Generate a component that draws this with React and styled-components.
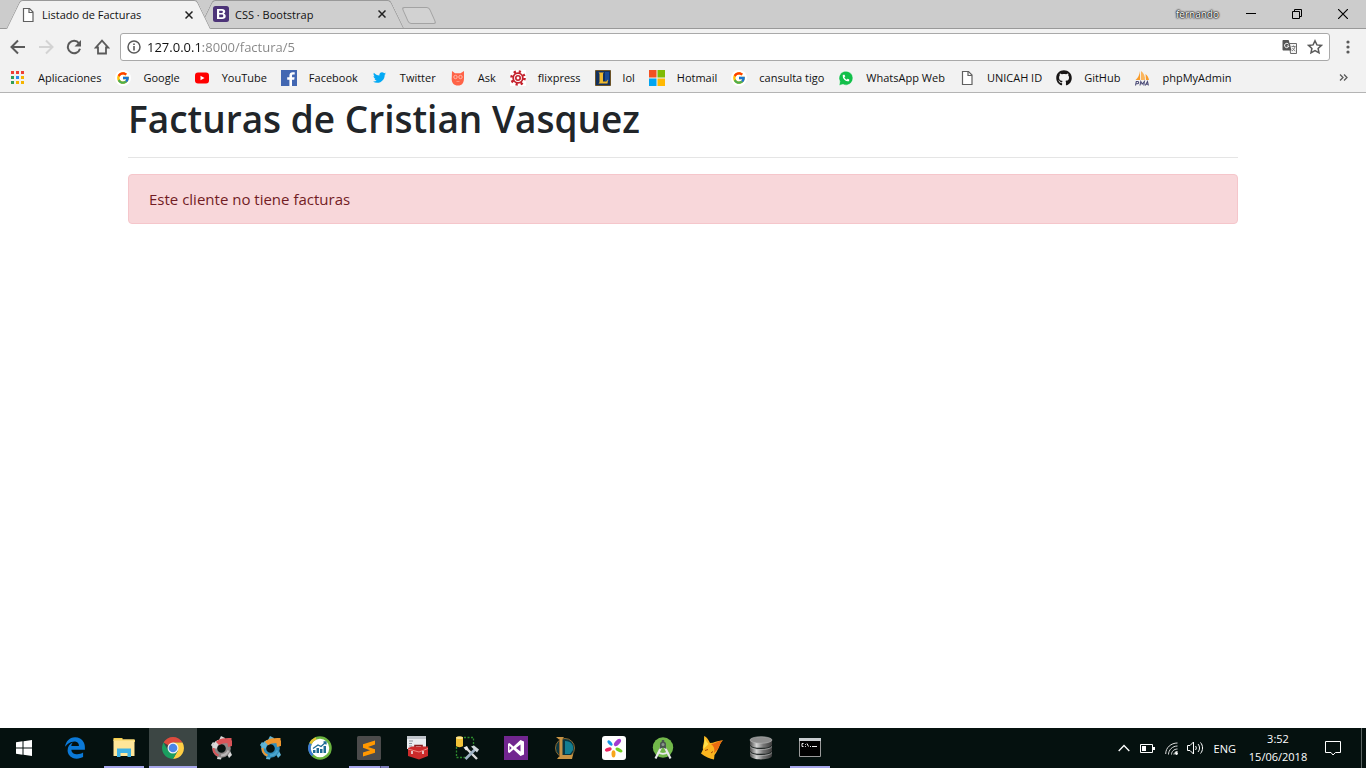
import React from "react";
import styled, { createGlobalStyle, css } from "styled-components";
import { FaGithub, FaTwitter, FaEdgeLegacy, FaPhone } from "react-icons/fa";
import { FcGoogle } from "react-icons/fc";

const GlobalStyle = createGlobalStyle`
  *, *::before, *::after { box-sizing: border-box; }
  body { margin: 0; font-family: "Segoe UI", "Open Sans", "Noto Sans", sans-serif; background: #fff; }
  button { font: inherit; color: inherit; border: 0; padding: 0; background: none; }
  a { color: inherit; text-decoration: none; }
  svg { display: block; flex: none; }
`;

const Screen = styled.div`
  display: flex;
  flex-direction: column;
  min-height: 100vh;
`;

/* ---------- Browser window ---------- */

const TabStrip = styled.div`
  display: flex;
  height: 29px;
  padding-left: 6px;
  background: #ccc;
  border-bottom: 1px solid #999;
`;

const tabSide = css`
  content: "";
  position: absolute;
  z-index: -1;
  top: 0;
  bottom: 0;
  width: 55%;
  border: 0 solid #999;
  border-top-width: 1px;
  background: ${(p) => (p.$active ? "#f2f2f2" : "#cfcfcf")};
`;

const Tab = styled.div`
  position: relative;
  z-index: ${(p) => (p.$active ? 2 : 1)};
  display: flex;
  align-items: center;
  gap: 6px;
  width: 205px;
  height: ${(p) => (p.$active ? "29px" : "28px")};
  margin-right: -12px;
  padding: 0 18px 0 14px;
  font-size: 11px;
  color: #111;
  &::before {
    ${tabSide}
    left: 0;
    border-left-width: 1px;
    border-top-left-radius: 3px;
    transform: skewX(-26deg);
    transform-origin: bottom left;
  }
  &::after {
    ${tabSide}
    right: 0;
    border-right-width: 1px;
    border-top-right-radius: 3px;
    transform: skewX(26deg);
    transform-origin: bottom right;
  }
`;

const TabTitle = styled.a`
  flex: 1;
  white-space: nowrap;
`;

const NewTab = styled.button`
  align-self: center;
  width: 28px;
  height: 17px;
  margin: 3px 0 0 13px;
  border: 1px solid #a3a3a3;
  border-radius: 3px;
  background: #d2d2d2;
  transform: skewX(24deg);
`;

const WindowControls = styled.div`
  display: flex;
  align-items: center;
  margin-left: auto;
`;

const Profile = styled.button`
  margin-right: 9px;
  font-size: 10px;
  color: #fff;
  text-shadow: 0 0 2px #000, 0 0 2px #000, 0 0 1px #000;
`;

const WindowButton = styled.button`
  display: grid;
  place-items: center;
  width: 46px;
  height: 27px;
`;

const Toolbar = styled.form`
  display: flex;
  align-items: flex-start;
  height: 33px;
  padding: 4px 0 0 8px;
  background: #f2f2f2;
`;

const ToolButton = styled.button`
  display: grid;
  place-items: center;
  width: ${(p) => (p.$wide ? "36px" : "28px")};
  height: 28px;
`;

const NavButtons = styled.div`
  display: flex;
  width: 112px;
  margin-left: -4px;
  margin-right: 4px;
`;

const AddressBox = styled.div`
  flex: 1;
  display: flex;
  align-items: center;
  height: 28px;
  padding: 0 6px;
  gap: 6px;
  background: #fff;
  border: 1px solid #a9a9a9;
  border-radius: 3px;
`;

const AddressInput = styled.input`
  flex: 1;
  min-width: 0;
  padding: 0;
  border: 0;
  outline: 0;
  font: 13px/20px "Segoe UI", "Open Sans", sans-serif;
  color: transparent;
  background: linear-gradient(to right, #111 56px, #858585 56px);
  background-clip: text;
`;

const AddressActions = styled.div`
  display: flex;
  gap: 9px;
`;

const BookmarksBar = styled.nav`
  display: flex;
  align-items: center;
  gap: 14px;
  height: 31px;
  padding: 1px 18px 0 10px;
  background: #f2f2f2;
  border-bottom: 1px solid #b4b4b4;
`;

const Bookmark = styled.a`
  display: flex;
  align-items: center;
  gap: 12px;
  font-size: 11px;
  color: #111;
  white-space: nowrap;
`;

const MoreBookmarks = styled.button`
  margin-left: auto;
`;

/* ---------- Page ---------- */

const Page = styled.main`
  flex: 1;
  width: 100%;
  max-width: 1140px;
  margin: 0 auto;
  padding: 0 15px;
  color: #212529;
`;

const Heading = styled.h1`
  margin: 0;
  font-size: 37px;
  font-weight: 600;
  line-height: 52px;
`;

const Rule = styled.hr`
  margin: 12px 0 16px;
  border: 0;
  border-top: 1px solid #e5e5e5;
`;

const Alert = styled.div`
  padding: 12px 20px;
  font-size: 15px;
  line-height: 24px;
  color: #721c24;
  background: #f8d7da;
  border: 1px solid #f5c6cb;
  border-radius: 4px;
`;

/* ---------- Taskbar ---------- */

const Taskbar = styled.footer`
  display: flex;
  height: 40px;
  color: #fff;
  background: #05110f;
`;

const Apps = styled.div`
  display: flex;
  gap: 1px;
  margin-left: 3px;
`;

const TaskButton = styled.button`
  position: relative;
  display: grid;
  place-items: center;
  width: 48px;
  height: 40px;
  background: ${(p) => (p.$state === "focused" ? "#3c4644" : "none")};
  &::after {
    content: "";
    display: ${(p) => (p.$state ? "block" : "none")};
    position: absolute;
    bottom: 0;
    left: ${(p) => (p.$state === "focused" ? "0" : "4px")};
    right: ${(p) => (p.$state === "focused" ? "0" : "4px")};
    height: 2px;
    background: ${(p) =>
      p.$state === "stacked"
        ? "linear-gradient(to right, #a6a6ea 31px, #4e4e7c 31px, #4e4e7c 32px, #7d7dba 32px)"
        : "#a6a6ea"};
  }
`;

const Tray = styled.div`
  display: flex;
  align-items: center;
  margin-left: auto;
  font-size: 11px;
`;

const TrayButton = styled.button`
  display: grid;
  place-items: center;
  width: 24px;
  height: 40px;
`;

const Language = styled.button`
  padding: 0 6px;
`;

const Clock = styled.time`
  width: 72px;
  text-align: center;
  line-height: 18px;
`;

const NotificationButton = styled.button`
  display: grid;
  place-items: center;
  width: 38px;
  height: 40px;
`;

const ShowDesktop = styled.button`
  width: 5px;
  height: 40px;
  margin-left: 9px;
  border-left: 1px solid #5a6462;
`;

/* ---------- Drawings ---------- */

const Svg = ({ s = 16, w, h, box, children, ...rest }) => (
  <svg width={w || s} height={h || s} viewBox={box || `0 0 ${w || s} ${h || s}`} fill="none" aria-hidden="true" {...rest}>
    {children}
  </svg>
);

const DocIcon = () => (
  <Svg>
    <path d="M3.5 1.5h6l3.5 3.5v9.5H3.5z" fill="#fff" stroke="#606060" strokeWidth="1.2" />
    <path d="M9 1.5V5.5H13" stroke="#606060" strokeWidth="1.2" />
  </Svg>
);

const BootstrapIcon = () => (
  <Svg>
    <rect width="16" height="16" rx="2.5" fill="#4d3478" />
    <path fillRule="evenodd" fill="#fff" d="M4 3h5c2 0 3.200 1 3.200 2.600 0 1-.5 1.800-1.400 2.200 1.200.3 1.900 1.200 1.900 2.400 0 1.800-1.300 2.800-3.500 2.800H4zM6.200 4.700v2.300h2.200c.9 0 1.500-.4 1.500-1.200s-.6-1.100-1.500-1.100zM6.200 8.600v2.700h2.500c1 0 1.600-.5 1.600-1.400 0-.8-.6-1.300-1.700-1.300z" />
  </Svg>
);

const CrossIcon = () => (
  <Svg s={8}>
    <path d="M0.500 0.500l7 7M7.500 0.500l-7 7" stroke="#222" strokeWidth="1.500" />
  </Svg>
);

const AppsIcon = () => {
  const c = ["#ef3f36", "#ef3f36", "#ef3f36", "#2f9d58", "#2b8cf0", "#f5b400", "#2f9d58", "#f5b400", "#f5b400"];
  return (
    <Svg>
      {c.map((f, i) => (
        <rect key={i} x={1 + (i % 3) * 5} y={1 + Math.floor(i / 3) * 5} width="3" height="3" fill={f} />
      ))}
    </Svg>
  );
};

const GoogleIcon = () => (
  <Svg>
    <circle cx="8" cy="8" r="8" fill="#fff" />
    <FcGoogle x="1" y="1" size={14} />
  </Svg>
);

const YouTubeIcon = () => (
  <Svg>
    <rect x="1" y="2.500" width="14" height="11" rx="3" fill="#f00" />
    <path d="M6.500 5.700v4.600L10.500 8z" fill="#fff" />
  </Svg>
);

const FacebookIcon = () => (
  <Svg>
    <path d="M0 0h16v16H0z" fill="#4267b2" />
    <path d="M11 16V9.800h2.200l.4-2.500H11V5.900c0-.8.3-1.300 1.400-1.300h1.300V2.300c-.4 0-1.100-.1-1.900-.1-2.100 0-3.400 1.200-3.400 3.400v1.700H6.200v2.500h2.200V16z" fill="#fff" />
  </Svg>
);

const TwitterIcon = () => (
  <Svg>
    <FaTwitter x="1" y="1" size={13} color="#03a9f4" />
  </Svg>
);

const AskIcon = () => (
  <Svg>
    <path d="M2 1l3 2.200h5.500L14 1v6c.3 6-2 8.500-6 8.500S1 13 1.800 7z" fill="#ff6347" />
    <circle cx="5.500" cy="7" r="1.700" fill="#ff6347" stroke="#ffb9aa" />
    <circle cx="10.500" cy="7" r="1.700" fill="#ff6347" stroke="#ffb9aa" />
    <path d="M6.500 11.500h3" stroke="#ff947f" />
  </Svg>
);

const GearIcon = () => (
  <Svg>
    <path d="M0 0h16v16H0z" fill="#fff" />
    <circle cx="8" cy="8" r="6.500" stroke="#c4202c" strokeWidth="2.600" strokeDasharray="2.200 2.905" />
    <circle cx="8" cy="8" r="4.800" stroke="#c4202c" strokeWidth="1.800" />
    <circle cx="8" cy="8" r="2.200" stroke="#c4202c" strokeWidth="1.600" />
  </Svg>
);

const LolIcon = () => (
  <Svg>
    <path d="M.5.500h15v15H.5z" fill="#12305f" stroke="#6d5428" />
    <path d="M10 2h4v9h-4z" fill="#1b4a93" />
    <path d="M3.500 2.500H9L8 3.500v8h3.300l1.700-2-.5 4H3.500l1-1.200V3.700z" fill="#f0b92d" />
  </Svg>
);

const MicrosoftIcon = () => (
  <Svg>
    <path d="M0 0h7.500v7.500H0z" fill="#f35022" />
    <path d="M8.500 0H16v7.500H8.500z" fill="#80bb03" />
    <path d="M0 8.500h7.500V16H0z" fill="#03a5f0" />
    <path d="M8.500 8.500H16V16H8.500z" fill="#ffb903" />
  </Svg>
);

const WhatsAppIcon = () => (
  <Svg>
    <path d="M1 15.500L1.800 11.500A7 7 0 1 1 5 14.500z" fill="#12bf4a" stroke="#fff" strokeWidth=".6" />
    <g transform="translate(16 0) scale(-1 1)">
      <FaPhone x="4.500" y="4.500" size={7} color="#fff" />
    </g>
  </Svg>
);

const PmaIcon = () => (
  <Svg>
    <path d="M6 1v9H1.500C4 8 5.500 5 6 1z" fill="#f89c2c" />
    <path d="M7 1c3 2 4.200 5.500 4 9H6.800z" fill="#fbb55c" />
    <path d="M11.500 4c2 1.500 3.200 4 3.500 6h-3z" fill="#f89c2c" />
    <path d="M1.500 15.500l.8-4h1.400c1.500 0 1.200 2.200-.4 2.200H2M6 15.500l.8-4 1.400 2.500 2.200-2.500-.6 4M11.200 15.500l2.300-4 .9 4M12 14.200h2" stroke="#4c4c78" strokeWidth="1.100" />
  </Svg>
);

const TranslateIcon = () => (
  <Svg>
    <path d="M7.500 4.500h7v10h-6z" fill="#f5f5f5" stroke="#6a6a6a" />
    <path d="M1.500 1h5.200l2.800 10.500h-8C.9 11.500.5 11 .5 10.500V2c0-.6.400-1 1-1z" fill="#555" />
    <path d="M6.600 5.300A2.200 2.200 0 1 0 6.900 7H4.800" stroke="#fff" />
    <path d="M9.500 7.500h4M11.500 6.500v1M13 7.500c-.4 2-1.500 3.500-3 4.500M10.500 9c.6 1.300 1.600 2.300 2.800 3" stroke="#777" strokeWidth=".9" />
  </Svg>
);

const ExplorerIcon = () => (
  <Svg s={24}>
    <path d="M1.500 2h9v3h-9z" fill="#f6cf4c" />
    <path d="M1.500 3.500h21V20h-21z" fill="#ffe699" />
    <path d="M5 12.500h14V21h-3.500v-4h-7v4H5z" fill="#3fb2e4" />
    <path d="M2 4h20.500v2" stroke="#f6d465" />
  </Svg>
);

const ChromeIcon = () => (
  <Svg s={24}>
    <path d="M12 12L2.500 6.500A11 11 0 0 1 21.500 6.500H12z" fill="#dd4b3e" />
    <path d="M21.500 6.500A11 11 0 0 1 12 23L16.800 14.800 12 6.500z" fill="#ffce44" />
    <path d="M2.500 6.500A11 11 0 0 0 12 23l4.800-8.200L12 12l-4.800 2.500z" fill="#1a9e5f" />
    <circle cx="12" cy="12" r="5.500" fill="#f4f4f4" />
    <circle cx="12" cy="12" r="4.300" fill="#4a86e8" />
  </Svg>
);

/* Interlocking ribbons around an open centre */
const SwirlIcon = ({ a, b, c }) => (
  <Svg s={24}>
    <path d="M9 4l2-4 4 2-1 4zM3 6L1 9l3 4 3-4zM8 19l-1 4 4 .5L12 20zM17 18l2 4 3-3-2-4z" fill={a} />
    <circle cx="11.500" cy="12.500" r="6.800" stroke={c} strokeWidth="5" />
    <path d="M4.700 12.500A6.800 6.800 0 0 1 9 6.200" stroke={a} strokeWidth="4.500" />
    <path d="M7.500 7.500C11 4 15 4.500 21.500 4.500" stroke={b} strokeWidth="4.800" />
    <path d="M17 4l5 .5V10l-4 1z" fill={b} />
    <path d="M3.500 12c0 4 2 6.500 5 7.500" stroke={b} strokeWidth="2" />
    <path d="M11 19.500c4 0 6-1.500 7.500-5" stroke={a} strokeWidth="2" opacity=".6" />
  </Svg>
);

const ChartIcon = () => (
  <Svg s={24}>
    <circle cx="12" cy="12" r="10.500" fill="#fff" stroke="#6bb43f" strokeWidth="2.500" />
    <path d="M4.600 19.400A10.500 10.500 0 0 1 2.500 7.500" stroke="#3c78d8" strokeWidth="2.500" />
    <path d="M2.500 7.500A10.500 10.500 0 0 1 8 2.300" stroke="#e8c332" strokeWidth="2.500" />
    <path d="M5 17v-3h2.500v3zM8.500 17v-5H11v5zM12 17v-4h2.500v4zM15.500 17v-7H18v7z" fill="#1f6c94" />
    <path d="M5 12.500l5-3.500 3 1.500 5-4.500M15.500 6H18v2.500" stroke="#1f6c94" strokeWidth="1.300" />
  </Svg>
);

const SublimeIcon = () => (
  <Svg s={24}>
    <rect width="24" height="24" rx="1.500" fill="#4b4b4b" />
    <path d="M18 4.500v4L11 11l7 2.300v3.500L6 20.500v-4l7-2.300-7-2.400V8.300z" fill="#ff9800" />
  </Svg>
);

const ToolboxIcon = () => (
  <Svg s={24}>
    <path d="M1 0h19v13H1z" fill="#e9ecef" />
    <path d="M1 0h19v3H1z" fill="#bfc4ca" />
    <path d="M3 5h4M3 7.500h3M3 10h3" stroke="#8a929b" />
    <path d="M9 12V9.500h7V12" stroke="#831c1c" strokeWidth="1.600" />
    <path d="M2 12l4-1.500h16V20l-9 3.500L2 20z" fill="#cc2b2b" />
    <path d="M2 13l11 3 9-3.500" stroke="#f18a85" />
    <path d="M6 15v3M17 15v3" stroke="#eee" strokeWidth="1.500" />
  </Svg>
);

const DbToolsIcon = () => (
  <Svg s={24}>
    <path d="M9 1.500h9.500V11M1.500 11v10.500H11" stroke="#2d8a2d" strokeWidth="1.300" strokeDasharray="2 1.500" />
    <path d="M1 1.500c1-1.500 6-1.500 7 0V10c-1 1.500-6 1.500-7 0z" fill="#f3c237" />
    <ellipse cx="4.500" cy="1.800" rx="3.500" ry="1.300" fill="#fde68f" />
    <path d="M11 12l11 11" stroke="#dadada" strokeWidth="2.400" />
    <path d="M20.500 13L10.500 23" stroke="#9fb2c4" strokeWidth="2.600" />
    <path d="M16 10.500l3-1 5 4-2 3z" fill="#d0d6dc" />
    <path d="M8.500 11.500l3.500-1.500 1.500 3-2.500 1.500z" fill="#eee" />
  </Svg>
);

const VisualStudioIcon = () => (
  <Svg s={24}>
    <path d="M0 0h24v24H0z" fill="#71268f" />
    <path fillRule="evenodd" d="M16.500 4L20 5.500v13L16.500 20l-7-6.500L5.500 17 4 16.200V7.800L5.500 7l4 3.500zM16.500 8.500L12 12l4.500 3.500zM5.500 9.800v4.400L7.700 12z" fill="#fff" />
  </Svg>
);

const LeagueIcon = () => (
  <Svg s={24}>
    <circle cx="12" cy="12" r="9.500" fill="#0b3641" stroke="#8b6a31" />
    <path d="M12 5c6 0 9 4 8 9l-3 4h-5z" fill="#137e91" />
    <path d="M3 1h8l-1.500 2v16h9l2-2-1.500 6H4l2-2.500V3.500z" fill="#c89445" />
    <path d="M6.500 3v18" stroke="#8c622d" />
  </Svg>
);

const PetalsIcon = () => (
  <Svg s={24}>
    <rect width="24" height="24" rx="3" fill="#fff" />
    <ellipse cx="15.500" cy="6.500" rx="2.300" ry="4.500" transform="rotate(43 15.500 6.500)" fill="#a33bd1" />
    <ellipse cx="8" cy="7" rx="1.700" ry="3.300" transform="rotate(-40 8 7)" fill="#1696e8" />
    <ellipse cx="6.300" cy="13.500" rx="3.500" ry="1.800" transform="rotate(-18 6.300 13.500)" fill="#ee2360" />
    <ellipse cx="11.500" cy="17.800" rx="2" ry="3.600" fill="#f8a51b" />
    <ellipse cx="17" cy="14" rx="3.800" ry="1.800" transform="rotate(28 17 14)" fill="#73cf22" />
  </Svg>
);

const AndroidStudioIcon = () => (
  <Svg s={24}>
    <circle cx="12" cy="11.500" r="10.200" fill="#72b84a" />
    <path d="M7 16c3 2.200 7 2.200 10 0" stroke="#e8eaea" strokeWidth="1.800" />
    <path d="M10 11.500L4.500 22.500M14 11.500l5.500 11" stroke="#e8eaea" strokeWidth="2.200" />
    <path d="M12 4v3" stroke="#4a5551" strokeWidth="2.400" />
    <path d="M9.500 8.500l-1 4.500 3.500-1.500 3.500 1.500-1-4.500z" fill="#4a5551" />
    <circle cx="12" cy="8.500" r="2.300" fill="#8a968c" stroke="#4a5551" strokeWidth="1.500" />
  </Svg>
);

const FoxIcon = () => (
  <Svg s={24}>
    <path d="M4 0c3 1 4.500 4 6 7 4 0 8-3 13-2.500-3 2-3 5-5 8.500-1.500 3-2 4-3.500 6l-.5 4.500c-4-.5-9-3-13-6l2-4C2 10 5 6 4 0z" fill="#fbb51f" />
    <path d="M11 8c4 0 8-4 12-3.500-3 2-3 5-5 8.500l-4 4c1-4 0-7-3-9z" fill="#e96b12" />
    <path d="M4.500 1c1 3 2 5 4 7l-5 5c0-4 1.500-7 1-12z" fill="#ffe04a" />
    <path d="M5 14.500l3-1M11 17l2-1.500" stroke="#a44707" />
  </Svg>
);

const DatabaseIcon = () => (
  <Svg s={24}>
    <defs>
      <linearGradient id="steel">
        <stop stopColor="#4a4a4a" />
        <stop offset=".3" stopColor="#d5d5d5" />
        <stop offset=".6" stopColor="#777" />
        <stop offset="1" stopColor="#3c3c3c" />
      </linearGradient>
    </defs>
    <path d="M1 4v16c2 4.500 20 4.500 22 0V4z" fill="url(#steel)" />
    <path d="M1 9.500c2 4 20 4 22 0M1 15.500c2 4 20 4 22 0" stroke="#1f2524" strokeWidth="1.300" />
    <path d="M1 10.500c2 4 20 4 22 0M1 16.500c2 4 20 4 22 0" stroke="#bdbdbd" strokeWidth=".7" />
    <ellipse cx="12" cy="4" rx="11" ry="3.300" fill="#8e8e8e" stroke="#bababa" strokeWidth=".6" />
  </Svg>
);

const ConsoleIcon = () => (
  <Svg s={24}>
    <path d="M1.500 2.500h21v18h-21z" fill="#000" stroke="#9b9b9b" />
    <path d="M1 2h22v3H1z" fill="#c8cdd0" />
    <path d="M5.500 7.500H4v3h1.500M7.500 8v.8M7.500 10v.8M9 7.500l1.500 3M12 10.500h1M14 10.500h5" stroke="#eee" />
  </Svg>
);

const bookmarks = [
  ["Aplicaciones", <AppsIcon />],
  ["Google", <GoogleIcon />],
  ["YouTube", <YouTubeIcon />],
  ["Facebook", <FacebookIcon />],
  ["Twitter", <TwitterIcon />],
  ["Ask", <AskIcon />],
  ["flixpress", <GearIcon />],
  ["lol", <LolIcon />],
  ["Hotmail", <MicrosoftIcon />],
  ["cansulta tigo", <GoogleIcon />],
  ["WhatsApp Web", <WhatsAppIcon />],
  ["UNICAH ID", <DocIcon />],
  ["GitHub", <FaGithub size={16} color="#181616" />],
  ["phpMyAdmin", <PmaIcon />],
];

const apps = [
  ["Edge", <FaEdgeLegacy size={22} color="#0b79d7" />],
  ["Explorer", <ExplorerIcon />, "open"],
  ["Chrome", <ChromeIcon />, "focused"],
  ["CCleaner", <SwirlIcon a="#d9d9d9" b="#d95458" c="#8c8787" />],
  ["Camtasia", <SwirlIcon a="#5fb4d6" b="#ee962f" c="#2f8dbb" />],
  ["Monitor", <ChartIcon />],
  ["Sublime Text", <SublimeIcon />, "stacked"],
  ["Toolbox", <ToolboxIcon />],
  ["Database tools", <DbToolsIcon />],
  ["Visual Studio", <VisualStudioIcon />],
  ["League", <LeagueIcon />],
  ["Petals", <PetalsIcon />],
  ["Android Studio", <AndroidStudioIcon />],
  ["FoxPro", <FoxIcon />],
  ["Database", <DatabaseIcon />],
  ["Console", <ConsoleIcon />, "open"],
];

export default function App() {
  return (
    <Screen>
      <GlobalStyle />
      <header>
        <TabStrip>
          <Tab $active>
            <DocIcon />
            <TabTitle href="#facturas">Listado de Facturas</TabTitle>
            <button aria-label="Cerrar"><CrossIcon /></button>
          </Tab>
          <Tab>
            <BootstrapIcon />
            <TabTitle href="#css">CSS · Bootstrap</TabTitle>
            <button aria-label="Cerrar"><CrossIcon /></button>
          </Tab>
          <NewTab aria-label="Nueva pestaña" />
          <WindowControls>
            <Profile>fernando</Profile>
            <WindowButton aria-label="Minimizar">
              <Svg s={10}><path d="M0 4.500h10" stroke="#000" /></Svg>
            </WindowButton>
            <WindowButton aria-label="Restaurar">
              <Svg s={10}><path d="M.5 2.500h7v7h-7zM2.500 2.500v-2h7v7h-2" stroke="#000" /></Svg>
            </WindowButton>
            <WindowButton aria-label="Cerrar ventana">
              <Svg s={10}><path d="M0 0l10 10M10 0L0 10" stroke="#000" strokeWidth="1.200" /></Svg>
            </WindowButton>
          </WindowControls>
        </TabStrip>
        <Toolbar onSubmit={(e) => e.preventDefault()}>
          <NavButtons>
            <ToolButton type="button" aria-label="Atrás">
              <Svg><path d="M15 8H2M8 1.500L1.500 8 8 14.500" stroke="#5a5a5a" strokeWidth="2" /></Svg>
            </ToolButton>
            <ToolButton type="button" aria-label="Adelante">
              <Svg><path d="M1 8h13M8 1.500L14.500 8 8 14.500" stroke="#d3d3d3" strokeWidth="2" /></Svg>
            </ToolButton>
            <ToolButton type="button" aria-label="Recargar">
              <Svg><path d="M13 4.300A6.200 6.200 0 1 0 14 9.800" stroke="#5a5a5a" strokeWidth="2" /><path d="M15 1v6.500H8.500z" fill="#5a5a5a" /></Svg>
            </ToolButton>
            <ToolButton type="button" aria-label="Inicio">
              <Svg><path d="M8 1.700L1.800 8.500H4v6h8v-6h2.200z" stroke="#5a5a5a" strokeWidth="1.800" /></Svg>
            </ToolButton>
          </NavButtons>
          <AddressBox>
            <Svg s={14}><circle cx="7" cy="7" r="6" stroke="#5a5a5a" strokeWidth="1.500" /><path d="M7 6v4.500M7 3.500V5" stroke="#5a5a5a" strokeWidth="1.600" /></Svg>
            <AddressInput aria-label="Dirección" defaultValue="127.0.0.1:8000/factura/5" />
            <AddressActions>
              <TranslateIcon />
              <Svg><path d="M8 1.800l1.900 4.100 4.500.5-3.300 3 .9 4.400L8 11.600l-4 2.200.9-4.400-3.300-3 4.500-.5z" stroke="#5a5a5a" strokeWidth="1.500" /></Svg>
            </AddressActions>
          </AddressBox>
          <ToolButton type="button" $wide aria-label="Menú">
            <Svg w={4} h={14}><circle cx="2" cy="2" r="1.600" fill="#5a5a5a" /><circle cx="2" cy="7" r="1.600" fill="#5a5a5a" /><circle cx="2" cy="12" r="1.600" fill="#5a5a5a" /></Svg>
          </ToolButton>
        </Toolbar>
        <BookmarksBar>
          {bookmarks.map(([label, icon]) => (
            <Bookmark key={label} href="#bookmark">
              {icon}
              {label}
            </Bookmark>
          ))}
          <MoreBookmarks aria-label="Más marcadores">
            <Svg s={9}><path d="M1 1.500l3 3-3 3M5 1.500l3 3-3 3" stroke="#5a5a5a" strokeWidth="1.300" /></Svg>
          </MoreBookmarks>
        </BookmarksBar>
      </header>

      <Page>
        <Heading>Facturas de Cristian Vasquez</Heading>
        <Rule />
        <Alert role="alert">Este cliente no tiene facturas</Alert>
      </Page>

      <Taskbar>
        <TaskButton aria-label="Inicio de Windows">
          <Svg><path d="M0 2.200l6.500-.9v6.200H0zM7.500 1.200L16 0v7.500H7.500zM0 8.500h6.500v6.200L0 13.800zM7.500 8.500H16V16l-8.500-1.200z" fill="#fff" /></Svg>
        </TaskButton>
        <Apps>
          {apps.map(([label, icon, state]) => (
            <TaskButton key={label} $state={state} aria-label={label}>{icon}</TaskButton>
          ))}
        </Apps>
        <Tray>
          <TrayButton aria-label="Iconos ocultos">
            <Svg w={12} h={8}><path d="M.7 7L6 1.500 11.300 7" stroke="#fff" strokeWidth="1.300" /></Svg>
          </TrayButton>
          <TrayButton aria-label="Batería">
            <Svg w={15} h={9}><path d="M.5.500h12v8H.5z" stroke="#fff" /><path d="M2 2h4v5H2zM13 3h2v3h-2z" fill="#fff" /></Svg>
          </TrayButton>
          <TrayButton aria-label="Red">
            <Svg w={13} h={13}>
              <path d="M.7 12C.7 5.500 6 1 12.500 1M3.500 12.500c0-4.500 4-8.500 9-8.500M6.500 12.500c0-3 2.500-5.500 6-5.500" stroke="#ddd" />
              <path d="M9 12.500c0-1.500 1.500-3 3.500-3" stroke="#fff" />
              <circle cx="11.500" cy="11.500" r="1.400" fill="#fff" />
            </Svg>
          </TrayButton>
          <TrayButton aria-label="Volumen">
            <Svg w={17} h={14}><path d="M.5 4.500H3L6.500 1v12L3 9.500H.5zM8.500 5c1 1.200 1 2.800 0 4M11 3c2 2.400 2 5.600 0 8M13.500 1.500c2.700 3 2.700 8 0 11" stroke="#fff" /></Svg>
          </TrayButton>
          <Language>ENG</Language>
          <Clock dateTime="2018-06-15T15:52">3:52<br />15/06/2018</Clock>
          <NotificationButton aria-label="Notificaciones">
            <Svg><path d="M.5 1.500h15v11h-5L8 15l-2-2.500H.5z" stroke="#fff" /></Svg>
          </NotificationButton>
          <ShowDesktop aria-label="Mostrar escritorio" />
        </Tray>
      </Taskbar>
    </Screen>
  );
}
